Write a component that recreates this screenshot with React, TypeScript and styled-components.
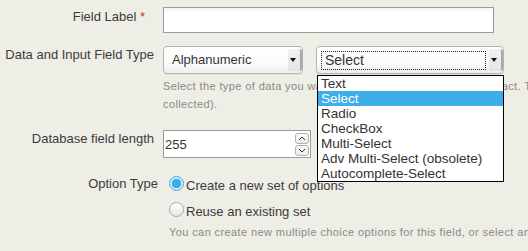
import React from "react";
import styled, { createGlobalStyle } from "styled-components";

const GlobalStyle = createGlobalStyle`
  html, body {
    margin: 0;
    padding: 0;
    background: #eeede6;
  }
  body {
    font-family: "Liberation Sans", Arial, sans-serif;
    font-size: 13px;
    color: #3c3c3c;
  }
`;

const fieldTypes = [
  "Text",
  "Select",
  "Radio",
  "CheckBox",
  "Multi-Select",
  "Adv Multi-Select (obsolete)",
  "Autocomplete-Select",
];

export default function App() {
  return (
    <>
      <GlobalStyle />
      <Form>
        <Row $top={7}>
          <Label $pr={18} $pt={2}>
            Field Label <Required>*</Required>
          </Label>
          <Cell>
            <TextInput $width={331} />
          </Cell>
        </Row>

        <Row $top={13}>
          <Label $pr={9} $pt={1}>
            Data and Input Field Type
          </Label>
          <Cell>
            <SelectRow>
              <Select $width={140}>
                <SelectText>Alphanumeric</SelectText>
                <ArrowBox>
                  <Arrow />
                </ArrowBox>
              </Select>
              <SelectWrap>
                <Select $width={188}>
                  <Focus>Select</Focus>
                  <ArrowBox>
                    <Arrow />
                  </ArrowBox>
                </Select>
                <Dropdown>
                  {fieldTypes.map((t) => (
                    <Option key={t} $active={t === "Select"}>
                      {t}
                    </Option>
                  ))}
                </Dropdown>
              </SelectWrap>
            </SelectRow>
            <Help>
              Select the type of data you want to collect and store for this contact. Then select
              from the available HTML input field types (choices are based on the type of data being
              <br />
              collected).
            </Help>
          </Cell>
        </Row>

        <Row $top={17}>
          <Label $pr={9} $pt={1}>
            Database field length
          </Label>
          <Cell>
            <NumberBox>
              <NumberText>255</NumberText>
              <Spinner>
                <SpinBtn>
                  <svg width="8" height="5" viewBox="0 0 8 5">
                    <path d="M1 4 L4 1 L7 4" fill="none" stroke="#333" strokeWidth="1" />
                  </svg>
                </SpinBtn>
                <SpinBtn>
                  <svg width="8" height="5" viewBox="0 0 8 5">
                    <path d="M1 1 L4 4 L7 1" fill="none" stroke="#333" strokeWidth="1" />
                  </svg>
                </SpinBtn>
              </Spinner>
            </NumberBox>
          </Cell>
        </Row>

        <Row $top={16}>
          <Label $pr={5} $pt={2}>
            Option Type
          </Label>
          <Cell $pl={6}>
            <RadioLine $first>
              <Radio $checked />
              Create a new set of options
            </RadioLine>
            <RadioLine>
              <Radio />
              Reuse an existing set
            </RadioLine>
            <Help>
              You can create new multiple choice options for this field, or select an existing set
            </Help>
          </Cell>
        </Row>
      </Form>
    </>
  );
}

const Form = styled.div`
  width: 528px;
  height: 251px;
  overflow: hidden;
`;

const Row = styled.div<{ $top: number }>`
  display: grid;
  grid-template-columns: 163px 1fr;
  margin-top: ${(p) => p.$top}px;
`;

const Label = styled.div<{ $pr: number; $pt: number }>`
  text-align: right;
  padding-right: ${(p) => p.$pr}px;
  padding-top: ${(p) => p.$pt}px;
  white-space: nowrap;
  line-height: 16px;
`;

const Required = styled.span`
  color: #c0392b;
`;

const Cell = styled.div<{ $pl?: number }>`
  padding-left: ${(p) => p.$pl ?? 0}px;
  min-width: 0;
`;

const TextInput = styled.div<{ $width: number }>`
  width: ${(p) => p.$width}px;
  height: 26px;
  box-sizing: border-box;
  border: 1px solid #9c9c9c;
  background: linear-gradient(#f4f4f4, #fff 4px);
`;

const SelectRow = styled.div`
  display: flex;
  gap: 13px;
`;

const SelectWrap = styled.div`
  position: relative;
`;

const Select = styled.div<{ $width: number }>`
  width: ${(p) => p.$width}px;
  height: 28px;
  box-sizing: border-box;
  border: 1px solid #b4b4b0;
  border-radius: 4px;
  background: linear-gradient(#ffffff, #fbfbfb 60%, #eeeeee);
  display: flex;
  align-items: center;
  padding-left: 4px;
  box-shadow: 0 1px 0 rgba(0, 0, 0, 0.06);
`;

const SelectText = styled.span`
  flex: 1;
  padding-left: 4px;
  line-height: 18px;
  color: #333;
`;

const Focus = styled.span`
  flex: 1;
  height: 19px;
  box-sizing: border-box;
  border: 1px dotted #222;
  padding-left: 3px;
  line-height: 17px;
  font-size: 14px;
  color: #333;
  margin-right: 3px;
`;

const ArrowBox = styled.div`
  width: 12px;
  align-self: stretch;
  margin: 2px 0;
  background: linear-gradient(#f2f2f2, #e4e4e4);
  border-right: 2px solid #a8a8a8;
  border-radius: 0 3px 3px 0;
  display: flex;
  align-items: center;
  justify-content: center;
`;

const Arrow = styled.span`
  width: 0;
  height: 0;
  border-left: 3px solid transparent;
  border-right: 3px solid transparent;
  border-top: 4px solid #111;
  margin-left: -2px;
`;

const Dropdown = styled.ul`
  position: absolute;
  left: 1px;
  top: 29px;
  width: 187px;
  box-sizing: border-box;
  margin: 0;
  padding: 0;
  list-style: none;
  background: #fff;
  border: 1px solid #000;
  z-index: 2;
`;

const Option = styled.li<{ $active?: boolean }>`
  height: 15px;
  line-height: 15px;
  padding-left: 3px;
  font-size: 13.5px;
  color: ${(p) => (p.$active ? "#fff" : "#333")};
  background: ${(p) => (p.$active ? "#3daee9" : "transparent")};
`;

const Help = styled.div`
  font-size: 11px;
  letter-spacing: 0.4px;
  color: #8a8a86;
  line-height: 18px;
  margin-top: 3px;
  white-space: nowrap;
`;

const NumberBox = styled.div`
  width: 148px;
  height: 28px;
  box-sizing: border-box;
  border: 1px solid #9c9c9c;
  background: #fff;
  display: flex;
  align-items: center;
`;

const NumberText = styled.span`
  flex: 1;
  padding-left: 1px;
  color: #333;
`;

const Spinner = styled.div`
  display: flex;
  flex-direction: column;
  gap: 1px;
  margin-right: 1px;
`;

const SpinBtn = styled.div`
  width: 14px;
  height: 11px;
  box-sizing: border-box;
  border: 1px solid #b0b0b0;
  border-radius: 3px;
  background: linear-gradient(#fafafa, #ececec);
  display: flex;
  align-items: center;
  justify-content: center;
`;

const RadioLine = styled.div<{ $first?: boolean }>`
  display: flex;
  align-items: flex-end;
  height: ${(p) => (p.$first ? 20 : 26)}px;
  line-height: 16px;
`;

const Radio = styled.span<{ $checked?: boolean }>`
  width: 15px;
  height: 15px;
  box-sizing: border-box;
  border-radius: 50%;
  margin-right: 2px;
  margin-bottom: 3px;
  border: 1px solid ${(p) => (p.$checked ? "#3daee9" : "#a8a8a8")};
  background: ${(p) =>
    p.$checked
      ? "radial-gradient(circle, #3daee9 0 4.5px, #cfe9f8 5px)"
      : "linear-gradient(#fff, #e8e8e8)"};
`;
